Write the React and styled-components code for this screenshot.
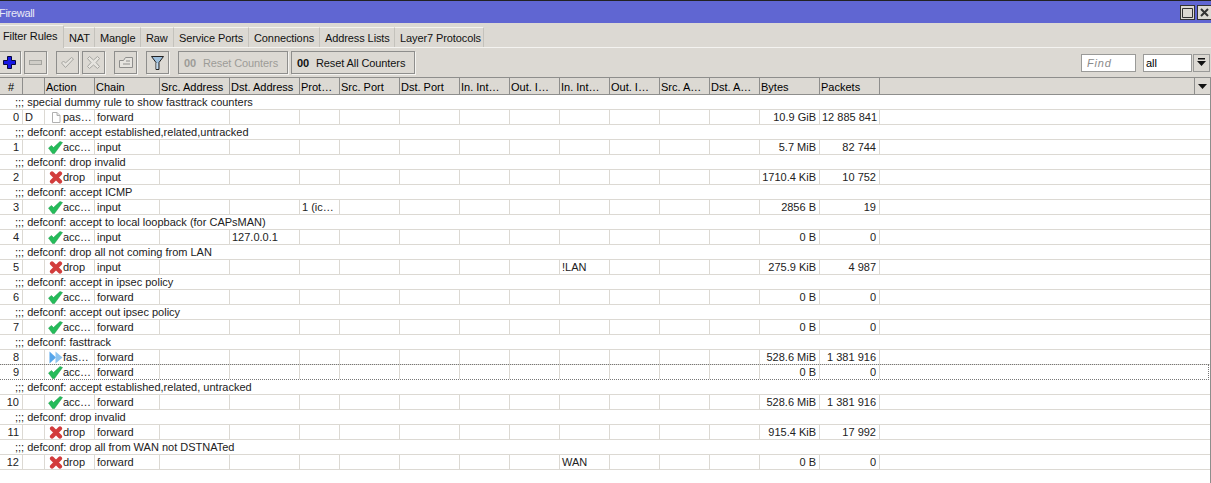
import React from 'react';
import styled, { createGlobalStyle } from 'styled-components';

const GlobalStyle = createGlobalStyle`
  html, body {
    margin: 0;
    padding: 0;
    background: #fff;
    overflow: hidden;
  }
  body {
    font-family: "Liberation Sans", Arial, sans-serif;
    font-size: 11px;
    color: #000;
  }
`;

const COLS = '23px 22px 50px 65px 70px 70px 40px 60px 60px 50px 50px 50px 50px 50px 50px 60px 60px 1fr';

const Window = styled.div`
  width: 1211px;
  height: 483px;
  background: #fff;
  border-top: 1px solid #222;
  box-sizing: border-box;
  display: flex;
  flex-direction: column;
  overflow: hidden;
`;

const TitleBar = styled.div`
  height: 22px;
  flex: none;
  background: #6066d2;
  color: #e9e9f6;
  display: flex;
  align-items: center;
  justify-content: space-between;
`;

const TitleText = styled.span`
  margin: 2px 0 0 -1px;
  letter-spacing: -0.3px;
`;

const WinButtons = styled.div`
  display: flex;
  gap: 2px;
  margin: 1px -1px 0 0;
`;

const WinButton = styled.div`
  width: 13px;
  height: 13px;
  background: #dcd9d3;
  border: 1px solid #333;
  display: flex;
  align-items: center;
  justify-content: center;
`;

const TabStrip = styled.div`
  height: 24px;
  flex: none;
  background: #dcd9d3;
  display: flex;
  align-items: flex-end;
  border-bottom: 1px solid #f4f3f0;
`;

const Tab = styled.div`
  width: ${p => p.$width}px;
  box-sizing: border-box;
  height: ${p => (p.$active ? '23px' : '20px')};
  line-height: 20px;
  padding-left: ${p => (p.$active ? '3px' : '5px')};
  border-right: 1px solid #c4c2bc;
  border-top: 1px solid #f4f3f0;
  margin-bottom: ${p => (p.$active ? '-1px' : '0')};
  color: #111;
  background: #dcd9d3;
  letter-spacing: -0.1px;
  white-space: nowrap;
  overflow: hidden;
`;

const Toolbar = styled.div`
  height: 30px;
  flex: none;
  background: #dcd9d3;
  display: flex;
  align-items: center;
  border-bottom: 1px solid #8e8e8c;
  box-sizing: border-box;
  padding-right: 1px;
`;

const ToolButton = styled.div`
  width: 21px;
  height: 21px;
  border: 1px solid #8e8e8c;
  box-shadow: 1px 1px 0 #f4f3f0;
  margin-left: ${p => p.$gap}px;
  display: flex;
  align-items: center;
  justify-content: center;
  flex: none;
`;

const TextButton = styled.div`
  height: 21px;
  width: ${p => p.$width}px;
  border: 1px solid #8e8e8c;
  box-shadow: 1px 1px 0 #f4f3f0;
  margin-left: ${p => p.$gap}px;
  display: flex;
  align-items: center;
  gap: 6px;
  padding-left: 5px;
  letter-spacing: -0.1px;
  color: ${p => (p.$off ? '#9c9c98' : '#111')};
  flex: none;
`;

const Zeros = styled.b`
  width: 13px;
`;

const Spacer = styled.div`
  flex: 1;
`;

const FindInput = styled.div`
  width: 48px;
  height: 16px;
  border: 1px solid #9a9a98;
  background: #fff;
  color: #8a8a8a;
  font-style: italic;
  letter-spacing: 0.8px;
  line-height: 16px;
  padding-left: 5px;
  margin-right: 7px;
`;

const SelectInput = styled.div`
  width: 45px;
  height: 16px;
  border: 1px solid #9a9a98;
  background: #fff;
  line-height: 17px;
  padding-left: 2px;
`;

const SelectArrow = styled.div`
  width: 15px;
  height: 16px;
  margin-left: 1px;
  border: 1px solid #9a9a98;
  display: flex;
  align-items: center;
  justify-content: center;
`;

const HeaderRow = styled.div`
  display: grid;
  flex: none;
  grid-template-columns: ${COLS};
  height: 16px;
  background: #dcd9d3;
  border-bottom: 1px solid #8e8e8c;
`;

const HeaderCell = styled.div`
  border-right: 1px solid #8e8e8c;
  padding-left: ${p => (p.$center ? '0' : '1px')};
  line-height: 19px;
  white-space: nowrap;
  overflow: hidden;
  text-align: ${p => (p.$center ? 'center' : 'left')};
`;

const HeaderTail = styled.div`
  display: flex;
  justify-content: flex-end;
  & > span {
    width: 15px;
    border-left: 1px solid #8e8e8c;
    border-right: 1px solid #8e8e8c;
    display: flex;
    align-items: center;
    justify-content: center;
  }
`;

const Rows = styled.div`
  flex: 1;
  border-right: 1px solid #8e8e8c;
`;

const CommentRow = styled.div`
  height: 14px;
  line-height: 14px;
  padding-left: 15px;
  white-space: nowrap;
  color: #222;
`;

const DataRow = styled.div`
  display: grid;
  grid-template-columns: ${COLS};
  height: 16px;
  box-sizing: border-box;
  border-top: 1px solid #dcd9d3;
  border-bottom: 1px solid #dcd9d3;
  color: #222;
  ${p => p.$focus && `
    margin-top: -1px;
    border: 1px dotted #777;
    border-left: 0;
    width: 1209px;
  `}
`;

const Cell = styled.div`
  border-right: 1px solid #dcd9d3;
  line-height: 14px;
  white-space: nowrap;
  overflow: hidden;
  padding: 0 ${p => (p.$right ? '3px' : '0')} 0 ${p => p.$pad ?? 2}px;
  text-align: ${p => (p.$right ? 'right' : 'left')};
  display: ${p => (p.$action ? 'flex' : 'block')};
  align-items: center;
`;

const IconSlot = styled.span`
  width: 15px;
  height: 14px;
  flex: none;
  display: flex;
  align-items: center;
  justify-content: center;
`;

const Check = () => (
  <svg width="15" height="13" viewBox="0 0 15 13">
    <path d="M0.500 7L3.500 4.500 5.500 6.500 12 .5 14.500 1.500 6.500 12.500H4.500z" fill="#25bb5a" stroke="#1f9a4a" strokeWidth="0.5" />
  </svg>
);

const Cross = () => (
  <svg width="14" height="13" viewBox="0 0 14 13">
    <path d="M3 2.500L11 10.500M11 2.500L3 10.500" stroke="#d23c3c" strokeWidth="4.200" strokeLinecap="round" />
  </svg>
);

const FastForward = () => (
  <svg width="14" height="13" viewBox="0 0 14 13">
    <path d="M0.500 0.500l6.500 6-6.500 6z" fill="#56a5ea" />
    <path d="M6.500 0.500l7 6-7 6z" fill="#8cc4f0" />
  </svg>
);

const Page = () => (
  <svg width="10" height="11" viewBox="0 0 10 11">
    <path d="M1.500.5h4.500l3 3v7h-7.500z" fill="#fff" stroke="#b0b0b0" />
    <path d="M6 .5v3h3" fill="#e6e6e6" stroke="#b0b0b0" />
  </svg>
);

const ActionIcon = { accept: Check, drop: Cross, fast: FastForward, pass: Page };

const tabs = [
  ['Filter Rules', 64],
  ['NAT', 31],
  ['Mangle', 46],
  ['Raw', 33],
  ['Service Ports', 75],
  ['Connections', 71],
  ['Address Lists', 75],
  ['Layer7 Protocols', 89],
];

const columns = ['#', '', 'Action', 'Chain', 'Src. Address', 'Dst. Address', 'Prot…', 'Src. Port', 'Dst. Port', 'In. Int…', 'Out. I…', 'In. Int…', 'Out. I…', 'Src. A…', 'Dst. A…', 'Bytes', 'Packets'];

const rules = [
  { comment: 'special dummy rule to show fasttrack counters', n: 0, flag: 'D', icon: 'pass', action: 'pas…', chain: 'forward', bytes: '10.9 GiB', packets: '12 885 841' },
  { comment: 'defconf: accept established,related,untracked', n: 1, icon: 'accept', action: 'acc…', chain: 'input', bytes: '5.7 MiB', packets: '82 744' },
  { comment: 'defconf: drop invalid', n: 2, icon: 'drop', action: 'drop', chain: 'input', bytes: '1710.4 KiB', packets: '10 752' },
  { comment: 'defconf: accept ICMP', n: 3, icon: 'accept', action: 'acc…', chain: 'input', proto: '1 (ic…', bytes: '2856 B', packets: '19' },
  { comment: 'defconf: accept to local loopback (for CAPsMAN)', n: 4, icon: 'accept', action: 'acc…', chain: 'input', dst: '127.0.0.1', bytes: '0 B', packets: '0' },
  { comment: 'defconf: drop all not coming from LAN', n: 5, icon: 'drop', action: 'drop', chain: 'input', inInt: '!LAN', bytes: '275.9 KiB', packets: '4 987' },
  { comment: 'defconf: accept in ipsec policy', n: 6, icon: 'accept', action: 'acc…', chain: 'forward', bytes: '0 B', packets: '0' },
  { comment: 'defconf: accept out ipsec policy', n: 7, icon: 'accept', action: 'acc…', chain: 'forward', bytes: '0 B', packets: '0' },
  { comment: 'defconf: fasttrack', n: 8, icon: 'fast', action: 'fas…', chain: 'forward', bytes: '528.6 MiB', packets: '1 381 916' },
  { n: 9, icon: 'accept', action: 'acc…', chain: 'forward', bytes: '0 B', packets: '0', focus: true },
  { comment: 'defconf: accept established,related, untracked', n: 10, icon: 'accept', action: 'acc…', chain: 'forward', bytes: '528.6 MiB', packets: '1 381 916' },
  { comment: 'defconf: drop invalid', n: 11, icon: 'drop', action: 'drop', chain: 'forward', bytes: '915.4 KiB', packets: '17 992' },
  { comment: 'defconf: drop all from WAN not DSTNATed', n: 12, icon: 'drop', action: 'drop', chain: 'forward', inInt: 'WAN', bytes: '0 B', packets: '0' },
];

const RuleRow = ({ rule }) => {
  const Icon = ActionIcon[rule.icon];
  return (
    <DataRow $focus={rule.focus}>
      <Cell $right>{rule.n}</Cell>
      <Cell>{rule.flag}</Cell>
      <Cell $action $pad={3}>
        <IconSlot><Icon /></IconSlot>
        {rule.action}
      </Cell>
      <Cell>{rule.chain}</Cell>
      <Cell />
      <Cell>{rule.dst}</Cell>
      <Cell>{rule.proto}</Cell>
      <Cell />
      <Cell />
      <Cell />
      <Cell />
      <Cell>{rule.inInt}</Cell>
      <Cell />
      <Cell />
      <Cell />
      <Cell $right>{rule.bytes}</Cell>
      <Cell $right>{rule.packets}</Cell>
      <div />
    </DataRow>
  );
};

const App = () => (
  <>
    <GlobalStyle />
    <Window>
      <TitleBar>
        <TitleText>Firewall</TitleText>
        <WinButtons>
          <WinButton>
            <svg width="11" height="11" viewBox="0 0 11 11"><path d="M.5 1.500h10v9h-10z" fill="none" stroke="#333" /></svg>
          </WinButton>
          <WinButton>
            <svg width="9" height="9" viewBox="0 0 9 9"><path d="M1 1l7 7M8 1l-7 7" stroke="#333" strokeWidth="2" /></svg>
          </WinButton>
        </WinButtons>
      </TitleBar>
      <TabStrip>
        {tabs.map(([label, width], i) => (
          <Tab key={label} $active={i === 0} $width={width}>{label}</Tab>
        ))}
      </TabStrip>
      <Toolbar>
        <ToolButton $gap={-2}>
          <svg width="13" height="13" viewBox="0 0 13 13"><path d="M4.500.5h4v4h4v4h-4v4h-4v-4h-4v-4h4z" fill="#1616e6" stroke="#060640" /></svg>
        </ToolButton>
        <ToolButton $gap={3}>
          <svg width="13" height="5" viewBox="0 0 13 5"><rect x=".5" y=".5" width="12" height="4" fill="#cfcdc7" stroke="#a5a5a0" /></svg>
        </ToolButton>
        <ToolButton $gap={9}>
          <svg width="13" height="11" viewBox="0 0 13 11"><path d="M.5 6L2.500 4l2 2L10.500.5l2 1.500-8 8.500z" fill="#e6e4df" stroke="#a5a5a0" /></svg>
        </ToolButton>
        <ToolButton $gap={3}>
          <svg width="13" height="13" viewBox="0 0 13 13"><path d="M2.500.5l4 3.500 4-3.500 2 2L9 6.500l3.500 4-2 2-4-3.500-4 3.500-2-2 3.500-4L.5 2.500z" fill="#e6e4df" stroke="#a5a5a0" /></svg>
        </ToolButton>
        <ToolButton $gap={9}>
          <svg width="14" height="11" viewBox="0 0 14 11"><path d="M.5 3.500h4l2-3h7v10H.5z" fill="#e6e4df" stroke="#8e8e8c" /><path d="M7 4h4M4 7h7" stroke="#8e8e8c" /></svg>
        </ToolButton>
        <ToolButton $gap={9}>
          <svg width="13" height="14" viewBox="0 0 13 14"><path d="M.5.5h12L8 6.500v7H5v-7z" fill="#9dbfdc" stroke="#222" /><path d="M6 7v6" stroke="#e8f0f8" /></svg>
        </ToolButton>
        <TextButton $gap={9} $off $width={103}>
          <Zeros>00</Zeros> Reset Counters
        </TextButton>
        <TextButton $gap={3} $width={117}>
          <Zeros>00</Zeros> Reset All Counters
        </TextButton>
        <Spacer />
        <FindInput>Find</FindInput>
        <SelectInput>all</SelectInput>
        <SelectArrow>
          <svg width="9" height="9" viewBox="0 0 9 9"><path d="M1 0h7v1.500H1zM0 3h9L4.500 8z" fill="#111" /></svg>
        </SelectArrow>
      </Toolbar>
      <HeaderRow>
        {columns.map((c, i) => (
          <HeaderCell key={i} $center={i === 0}>{c}</HeaderCell>
        ))}
        <HeaderTail>
          <span>
            <svg width="9" height="5" viewBox="0 0 9 5"><path d="M0 0h9L4.500 5z" fill="#111" /></svg>
          </span>
        </HeaderTail>
      </HeaderRow>
      <Rows>
        {rules.map(rule => (
          <React.Fragment key={rule.n}>
            {rule.comment && <CommentRow>;;; {rule.comment}</CommentRow>}
            <RuleRow rule={rule} />
          </React.Fragment>
        ))}
      </Rows>
    </Window>
  </>
);

export default App;
